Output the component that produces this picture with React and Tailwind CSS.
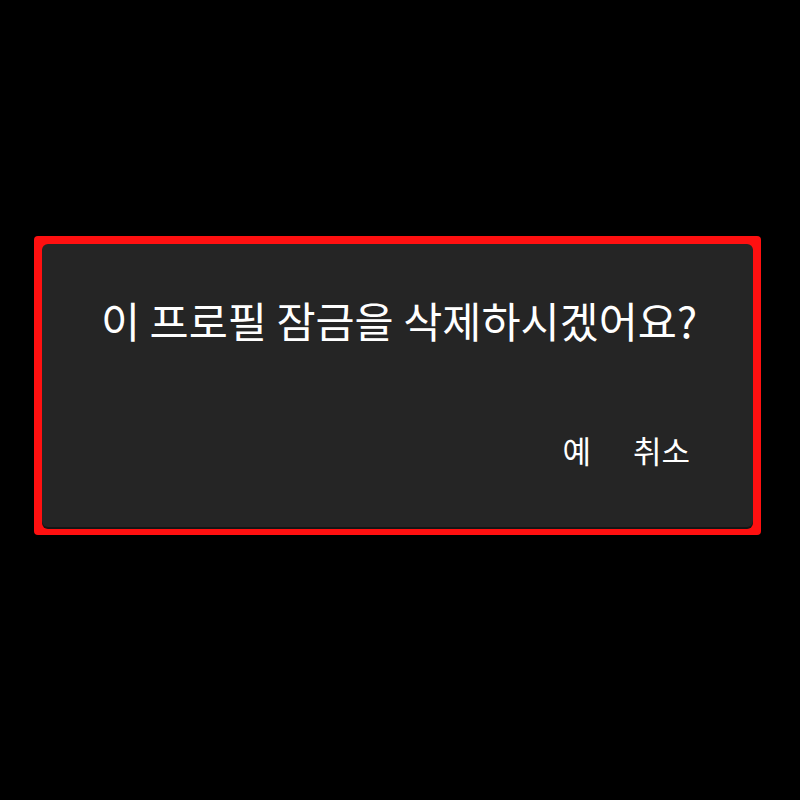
export default function App() {
  return (
    <div className="w-[800px] h-[800px] bg-black pt-[236px] pl-[34px]" style={{ fontFamily: '"Noto Sans CJK KR", "Noto Sans", sans-serif' }}>
      <div className="w-[727px] h-[299px] bg-[#ff1010] rounded-[4px] p-[8px]">
        <div className="w-full h-full bg-[#252525] rounded-[6px] shadow-[0_2px_0_#151515] flex flex-col">
          <p className="text-white text-[42.5px] text-center pt-[48px] pl-[3px] leading-[1.3]">
            이 프로필 잠금을 삭제하시겠어요?
          </p>
          <div className="flex justify-end gap-[42px] pr-[63px] mt-[80px] text-white text-[31px] leading-[1.5]">
            <button>예</button>
            <button>취소</button>
          </div>
        </div>
      </div>
    </div>
  );
}
